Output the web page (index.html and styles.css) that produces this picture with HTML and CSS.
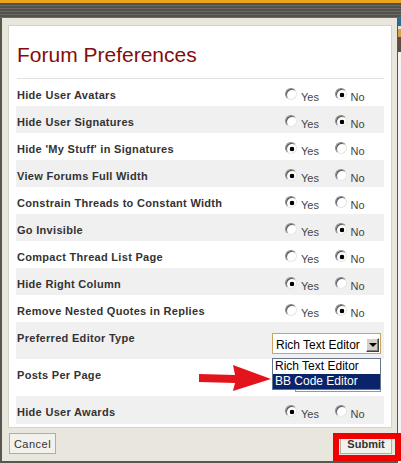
FILE: index.html
```html
<!DOCTYPE html>
<html lang="en">
  <head>
    <meta charset="UTF-8" />
    <title>Forum Preferences</title>
    <link rel="stylesheet" href="styles.css">
  </head>
  <body>
    <div class="topbar"></div>

    <div class="frame">
      <div class="dialog">
        <div class="panel">
          <h1 class="title">Forum Preferences</h1>

          <div class="prefs">
            <div class="row">
              <span class="label">Hide User Avatars</span>
              <span class="opts">
                <label class="opt"><input type="radio" name="avatars"><span>Yes</span></label>
                <label class="opt"><input type="radio" name="avatars" checked><span>No</span></label>
              </span>
            </div>
            <div class="row">
              <span class="label">Hide User Signatures</span>
              <span class="opts">
                <label class="opt"><input type="radio" name="sigs"><span>Yes</span></label>
                <label class="opt"><input type="radio" name="sigs" checked><span>No</span></label>
              </span>
            </div>
            <div class="row">
              <span class="label">Hide 'My Stuff' in Signatures</span>
              <span class="opts">
                <label class="opt"><input type="radio" name="mystuff" checked><span>Yes</span></label>
                <label class="opt"><input type="radio" name="mystuff"><span>No</span></label>
              </span>
            </div>
            <div class="row">
              <span class="label">View Forums Full Width</span>
              <span class="opts">
                <label class="opt"><input type="radio" name="fullwidth" checked><span>Yes</span></label>
                <label class="opt"><input type="radio" name="fullwidth"><span>No</span></label>
              </span>
            </div>
            <div class="row">
              <span class="label">Constrain Threads to Constant Width</span>
              <span class="opts">
                <label class="opt"><input type="radio" name="constrain" checked><span>Yes</span></label>
                <label class="opt"><input type="radio" name="constrain"><span>No</span></label>
              </span>
            </div>
            <div class="row">
              <span class="label">Go Invisible</span>
              <span class="opts">
                <label class="opt"><input type="radio" name="invisible"><span>Yes</span></label>
                <label class="opt"><input type="radio" name="invisible" checked><span>No</span></label>
              </span>
            </div>
            <div class="row">
              <span class="label">Compact Thread List Page</span>
              <span class="opts">
                <label class="opt"><input type="radio" name="compact"><span>Yes</span></label>
                <label class="opt"><input type="radio" name="compact" checked><span>No</span></label>
              </span>
            </div>
            <div class="row">
              <span class="label">Hide Right Column</span>
              <span class="opts">
                <label class="opt"><input type="radio" name="rightcol" checked><span>Yes</span></label>
                <label class="opt"><input type="radio" name="rightcol"><span>No</span></label>
              </span>
            </div>
            <div class="row">
              <span class="label">Remove Nested Quotes in Replies</span>
              <span class="opts">
                <label class="opt"><input type="radio" name="quotes"><span>Yes</span></label>
                <label class="opt"><input type="radio" name="quotes" checked><span>No</span></label>
              </span>
            </div>
            <div class="row row-tall">
              <span class="label">Preferred Editor Type</span>
              <div class="editor">
                <div class="select">
                  <span>Rich Text Editor</span>
                  <span class="drop-btn"></span>
                </div>
                <ul class="menu">
                  <li>Rich Text Editor</li>
                  <li class="active">BB Code Editor</li>
                </ul>
              </div>
            </div>
            <div class="row row-tall">
              <span class="label">Posts Per Page</span>
              <span class="field"></span>
            </div>
            <div class="row row-last">
              <span class="label">Hide User Awards</span>
              <span class="opts">
                <label class="opt"><input type="radio" name="awards" checked><span>Yes</span></label>
                <label class="opt"><input type="radio" name="awards"><span>No</span></label>
              </span>
            </div>
          </div>
        </div>

        <div class="footer">
          <button class="btn btn-cancel">Cancel</button>
          <button class="btn btn-submit">Submit</button>
        </div>
      </div>
      <div class="side"></div>
    </div>

    <!-- annotations drawn over the screenshot -->
    <svg class="pointer" width="73" height="28" viewBox="199 364 73 28">
      <polygon points="199,374 235,375 233,365 271,379 233,391 235,383 199,382" fill="#e3141b" />
    </svg>
    <div class="highlight"></div>
  </body>
</html>
```

FILE: styles.css
```css
body {
  margin: 0;
  width: 401px;
  height: 463px;
  overflow: hidden;
  position: relative;
  font-family: "Liberation Sans", Arial, sans-serif;
  background-color: #fff;
  color: #333;
}

.topbar {
  height: 15px;
  border-top: 3px solid #e9a41e;
  background: repeating-linear-gradient(to bottom, #52514c 0 2px, #6b6a65 2px 3px);
}

.frame {
  display: flex;
}

.dialog {
  box-sizing: border-box;
  width: 398px;
  height: 445px;
  padding: 7px 5px 0 6px;
  background-color: #e8e6dd;
  border-left: 2px solid #57564f;
  border-right: 1px solid #57564f;
  border-bottom: 2px solid #57564f;
}

.side {
  width: 3px;
  height: 445px;
  background: linear-gradient(to bottom, #2b6d8c 0 8px, #e7e3d6 8px 11px, #d6a152 11px 19px, #5e4c3c 19px 34px, #f4f4f4 34px);
}

.panel {
  height: 403px;
  box-sizing: border-box;
  padding: 0 7px 3px;
  background-color: #fff;
  border: 1px solid #d4d2c9;
}

.title {
  margin: 17px 0 0 1px;
  padding-bottom: 11px;
  border-bottom: 1px solid #e2e2e2;
  font-size: 21px;
  line-height: 24px;
  font-weight: normal;
  color: #850c0c;
}

.row {
  display: flex;
  height: 27px;
  padding-left: 1px;
}

.row:nth-child(even) {
  background-color: #f0f0f0;
}

.row-tall {
  height: 37px;
}

.row-last {
  height: 28px;
}

.label {
  flex: 1;
  padding-top: 10px;
  font-size: 11px;
  line-height: 13px;
  font-weight: bold;
  letter-spacing: 0.3px;
  color: #333;
}

.opts {
  display: flex;
  width: 99px;
}

.opt {
  display: flex;
  width: 50px;
  font-size: 11px;
  color: #444;
}

.opt span {
  padding-top: 12px;
  line-height: 13px;
}

.opt input {
  appearance: none;
  -webkit-appearance: none;
  box-sizing: border-box;
  width: 12px;
  height: 12px;
  margin: 9px 4px 0 0;
  border-radius: 50%;
  border: 1px solid;
  border-color: #8a8a8a #e6e6e6 #e6e6e6 #8a8a8a;
  background-color: #fff;
  box-shadow: inset 1px 1px 0 #555;
}

.opt input:checked {
  background: radial-gradient(circle at 6px 6px, #000 0 2px, #fff 2.6px);
}

.editor {
  position: relative;
  width: 109px;
  margin: 11px 3px 0 0;
}

.select {
  display: flex;
  justify-content: space-between;
  box-sizing: border-box;
  height: 21px;
  padding: 0 1px 0 3px;
  border: 1px solid #c9a565;
  background-color: #fff;
  font-size: 12px;
  color: #000;
}

.select span:first-child {
  padding-top: 4px;
  line-height: 14px;
}

.drop-btn {
  position: relative;
  box-sizing: border-box;
  width: 13px;
  height: 14px;
  margin-top: 4px;
  background-color: #d4d0c8;
  border: 1px solid;
  border-color: #fff #404040 #404040 #fff;
  box-shadow: inset -1px -1px 0 #808080;
}

.drop-btn::after {
  content: "";
  position: absolute;
  left: 2px;
  top: 4px;
  border-left: 4px solid transparent;
  border-right: 4px solid transparent;
  border-top: 4px solid #000;
}

.menu {
  position: absolute;
  z-index: 2;
  top: 25px;
  left: 0;
  width: 109px;
  box-sizing: border-box;
  margin: 0;
  padding: 0;
  list-style: none;
  border: 1px solid #66758a;
  background-color: #fff;
  font-size: 12px;
  color: #000;
}

.menu li {
  height: 15px;
  line-height: 15px;
  padding-left: 2px;
}

.menu .active {
  background-color: #0a246a;
  color: #fff;
}

.field {
  box-sizing: border-box;
  width: 86px;
  height: 20px;
  margin: 13px 3px 0 0;
  border: 1px solid #7f9db9;
  background-color: #fff;
}

.footer {
  display: flex;
  justify-content: space-between;
  padding: 5px 0 0 1px;
}

.btn {
  box-sizing: border-box;
  height: 21px;
  padding: 0;
  border: 1px solid #b0aea4;
  background-color: #f2f1ec;
  font-family: "Liberation Sans", Arial, sans-serif;
  font-size: 11px;
  color: #333;
}

.btn-cancel {
  width: 47px;
  letter-spacing: 0.5px;
}

.btn-submit {
  width: 52px;
  font-weight: bold;
}

.pointer {
  position: absolute;
  left: 199px;
  top: 364px;
}

.highlight {
  position: absolute;
  left: 333px;
  top: 433px;
  width: 68px;
  height: 28px;
  box-sizing: border-box;
  border: 6px solid #f20000;
}
```
